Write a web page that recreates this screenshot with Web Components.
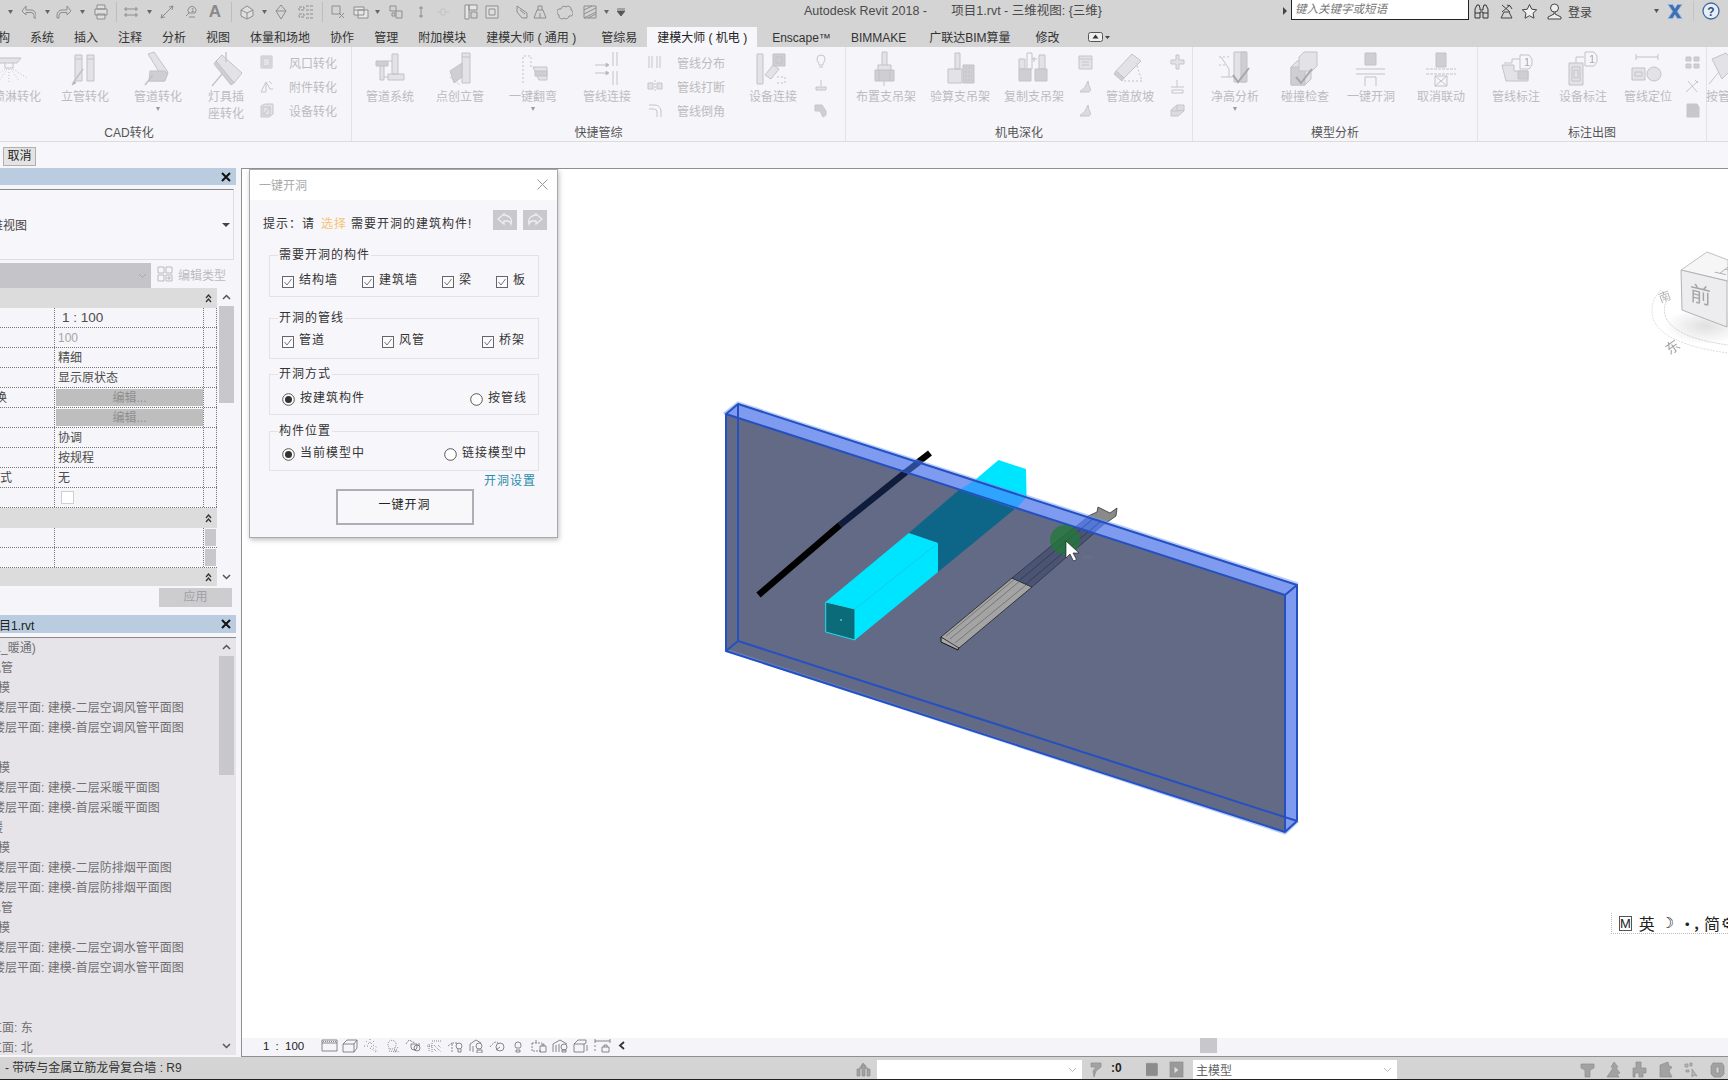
<!DOCTYPE html>
<html lang="zh"><head><meta charset="utf-8"><title>Revit</title>
<style>html,body{margin:0;padding:0;background:#f6f5f9;overflow:hidden}</style>
</head><body>
<rv-app></rv-app>
<script>
const FONT='"Liberation Sans","Noto Sans CJK SC",sans-serif';
const F='fill="#e3e3e6"',D='fill="#cfcfd3"';
const RI={
sprinkler:`<path ${F} d="M-6 7h28l-4 5H-2z"/><path d="M6 12v5h8v-5"/><path stroke-dasharray="1 2" d="M8 18l-8 12M10 18v14M12 18l8 12M14 18l14 9M6 18l-12 9"/>`,
riser:`<path ${F} d="M8 4h7v26H8zM20 4h7v26h-7z"/><path d="M8 8h7M20 8h7"/><path d="M6 32l10-14" stroke-width="1.6"/><path d="M5 34l2-4 2 2z" fill="#aaa"/>`,
pipe:`<path ${F} d="M8 3l6-2 14 20-4 9H9l12-6z"/><path ${D} d="M10 20h14l4 2-3 8H9z"/><path d="M5 34l8-10" stroke-width="1.6"/>`,
lamp:`<path ${F} d="M8 10l6-6 20 18-8 10z"/><path ${D} d="M8 10l18 22-3 2L6 13z"/><path d="M18 1v10M4 35l10-12" stroke-width="1.3"/>`,
system:`<path ${D} d="M4 10h12v5H4z"/><path ${F} d="M8 15h4v14H8zM20 3h6v20h-6zM16 23h16v6H16z"/><path d="M16 10h4M12 26h4"/>`,
dotriser:`<path ${F} d="M20 2h8v30h-8z"/><path d="M20 6h8"/><path ${D} d="M8 20l12-8v14l-8 6z"/><path d="M8 26l10 8" stroke-dasharray="2 1"/>`,
bend:`<path stroke-dasharray="2 2" d="M8 32V5h8v13"/><path ${F} d="M18 16h14v13H24z"/><path ${D} d="M20 20h12v5H20z"/>`,
connect:`<path d="M24 1v14M28 1v14M24 20v14M28 20v14"/><path d="M6 14h14M6 22h14"/><path d="M20 14l-3-2v4zM20 22l-3-2v4z" fill="#aaa"/>`,
device:`<path ${F} d="M2 3h6v30H2z"/><path ${D} d="M18 3h12v12H18z"/><path d="M21 6h6v6h-6z"/><path ${F} d="M10 24l8-10 6 4-8 10z"/><path stroke-dasharray="2 2" d="M22 26h8v6h-8"/>`,
support:`<path ${F} d="M14 1h5v16h-5z"/><path ${D} d="M7 19h19v11H7z"/><path ${F} d="M10 14h13v5H10z"/><path d="M16 30v5M11 19v11M22 19v11"/>`,
check:`<path ${F} d="M13 2h5v16h-5zM6 18h14v14H6z"/><path ${D} d="M21 14h11v18H21z"/><path stroke-dasharray="2 1" d="M23 17h7M23 21h7M23 25h7M23 29h7"/>`,
copy:`<path ${F} d="M3 8h6v10H3zM23 4h6v14h-6z"/><path ${D} d="M3 18h12v12H3zM19 18h12v12H19z"/><path d="M11 2h5v16h-5zM16 8h5M18 6v5" />`,
slope:`<path ${F} d="M4 20L20 3l9 7-17 17z"/><path ${D} d="M4 20l8 7-2 3-8-7z"/><path stroke-dasharray="2 2" d="M12 30h18L24 12"/>`,
clear:`<path d="M4 6l8 12v8M4 26h12"/><path stroke-dasharray="2 2" d="M2 6h10M2 14h8"/><path ${F} d="M17 1h12v30H17z"/><path ${D} d="M24 1h6v30h-6z"/><path d="M16 24l5 7 11-14" stroke="#a8a8ac" stroke-width="2"/>`,
clash:`<path ${F} d="M4 16l6-6h14v18l-6 6H4z"/><path ${D} d="M4 16h14v18H4z"/><path ${F} d="M12 6l5-5h13v14l-5 5H12z"/><path d="M9 26l5 6 11-14" stroke="#a8a8ac" stroke-width="2"/>`,
hole:`<path ${D} d="M12 2h11v12H12z"/><path d="M3 18h29M3 23h29M12 26v9M23 26v9M12 26h11"/>`,
unlink:`<path ${D} d="M13 2h10v14H13z"/><path stroke-dasharray="3 1" d="M3 18h30M3 23h30"/><path d="M12 25h12v10H12zM12 25l12 10M24 25L12 35"/>`,
tag:`<path ${F} d="M4 20h12v6h14v10H8z" transform="translate(0 -6)"/><path d="M22 4h9l3 4v6l-3 4h-9z"/><path ${D} d="M20 20h10v8H20z"/><path d="M6 12h8v-4h8"/><text x="26" y="15" font-size="11" fill="#aaa" stroke="none" font-family="Liberation Sans">1</text>`,
dtag:`<path ${F} d="M4 12h14v22H4z"/><path d="M7 16h8v14H7zM9 19h4v8H9zM11 12V6h8"/><path d="M20 1h9l3 4v6l-3 4h-9z"/><text x="24" y="12" font-size="11" fill="#aaa" stroke="none" font-family="Liberation Sans">1</text>`,
locate:`<path d="M6 6h22M6 3v6M28 3v6"/><path ${F} d="M2 17h13v12H2z"/><path d="M5 21h7v4H5z"/><circle ${F} cx="24" cy="23" r="7"/>`,
generic:`<path ${F} d="M6 8l14-6 10 12-14 14z"/><path d="M3 33l10-12"/>`
};
const SI={
vent:`<path fill="#e3e3e6" d="M2 2h11v12H2z"/><path d="M4 4h7v8H4z"/>`,
fit:`<path d="M2 14l5-10 4 7h3M7 4v10H2M10 3l3 3"/>`,
equip:`<path fill="#e3e3e6" d="M2 4l4-2h8v10l-4 3H2z"/><path d="M4 5h7v8H4zM5 12l5-6"/>`,
dist:`<path d="M2 2v12M5 2v12M10 2v12M13 2v12"/>`,
brk:`<path fill="#e3e3e6" d="M1 5h5v6H1zM10 5h5v6h-5z"/><path d="M8 2v12" stroke-dasharray="2 1"/>`,
fillet:`<path d="M2 3h6a6 6 0 016 6v6M2 7h5a3 3 0 013 3v5"/>`,
bulb:`<path d="M4 5a4 4 0 018 0c0 3-2 3-2 6H6c0-3-2-3-2-6zM6 13h4"/>`,
ins:`<path d="M8 2v6M3 9h10v3H3z" fill="#e3e3e6"/>`,
paint:`<path fill="#cfcfd3" d="M2 3h7l4 6v4l-3 2-3-6H2z"/>`,
cal:`<path fill="#e3e3e6" d="M2 2h13v13H2z"/><path d="M2 5h13M5 8h7M5 11h7"/>`,
mark:`<path d="M3 14c2-4 4-2 5-5l3-6 1 5c2 2 2 5 0 6z" fill="#dcdce0"/>`,
plus:`<path fill="#e3e3e6" d="M7 1h3v5h5v4h-5v5H7v-5H2V6h5z"/>`,
bar:`<path d="M8 2v7M2 9h13M3 12h11v3H3z"/>`,
eraser:`<path fill="#dcdce0" d="M2 8l6-5h7v6l-6 5H2z"/><path d="M8 3v6H2M8 9l7-1"/>`,
dots:`<path fill="#d0d0d4" d="M2 3h5v4H2zM10 3h5v4h-5zM2 10h5v4H2zM10 10h5v4h-5z"/>`,
tools:`<path d="M2 14L14 3M4 3l9 11M11 2l3 3"/>`,
doc:`<path fill="#c8c8cc" d="M3 2h10l2 3v10H3z"/><path d="M5 6h7M5 9h7M5 12h7"/>`
};
const QA={
undo:`<path d="M6 2L2 7l4 4V8.500h5a3 3 0 013 3V14h2v-3a5 5 0 00-5-5H6z"/>`,
redo:`<path d="M10 2l4 5-4 4V8.500H5a3 3 0 00-3 3V14H0v-3a5 5 0 015-5h5z" fill="none"/>`,
print:`<path fill="#dedede" d="M4 1h8v4H4zM2 5h12v6H2zM4 10h8v5H4z"/>`,
align:`<path d="M1 5h14M1 11h14M3 3v4M13 3v4M3 9v4M13 9v4"/>`,
diag:`<path d="M2 14L14 2M2 14l1-4M2 14l4-1M14 2l-4 1M14 2l-1 4"/>`,
tag:`<path d="M2 12l3-3a4 4 0 116 0h-6M5 13h6" /><text x="7" y="8" font-size="6" stroke="none" fill="#777">1</text>`,
house:`<path fill="#e0e0e0" d="M2 6l6-4 6 4v6l-6 3-6-3z"/><path d="M2 6l6 3 6-3M8 9v6"/>`,
gem:`<path d="M8 1l5 6-5 8-5-8zM3 7h10"/>`,
list:`<path d="M1 3h5v3H1zM1 10h5v3H1zM8 2h7M8 6h7M8 10h7M8 14h7" stroke-dasharray="3 1"/>`,
cut:`<path d="M2 2h8v8H2zM9 9l5 5M14 9l-5 5"/>`,
sw:`<path d="M1 3h10v8H1zM5 6h10v8H5z" fill="#e8e8e8"/><path d="M1 6h10"/>`,
tb:`<path d="M2 2h6v5H2zM8 7h6v7H8zM4 9h3v3H4z"/>`,
dim:`<path d="M8 2v12M6 4h4M6 12h4"/>`,
faint:`<path stroke="#c4c4c4" d="M2 8h4M10 8h4M6 5h4v6H6z"/>`,
win:`<path fill="#e6e6e6" d="M2 1h4v14H2zM6 1h8v5H6z"/><path d="M8 8h6v6H8z"/>`,
box:`<path d="M2 2h12v12H2zM5 5h6v6H5z" fill="#dedede"/>`,
wedge:`<path d="M3 2l10 7v5H8L3 8zM6 6l5 4"/>`,
mount:`<path d="M2 14l3-8h6l3 8zM6 6V2h4v4M8 9v5"/>`,
cloud:`<path d="M4 5a3 3 0 015-2 3 3 0 015 3 3 3 0 01-2 6 3 3 0 01-5 2 3 3 0 01-5-3 3 3 0 012-6z"/>`,
hatch:`<path d="M2 2h12v12H2zM2 6l8-4M2 10l12-6M2 14l12-6M6 14l8-4"/>`
};
const VB=['<path d="M1 2h15v11H1zM1 5h15" /><path stroke-dasharray="1 1" d="M2 3.500h13"/>','<path d="M1 6h11v8H1zM1 6l4-4h10v8l-3 4M12 6l3-4"/>','<path stroke-dasharray="1 2" d="M7 1v4M1 8h4M3 3l3 3M11 3l-3 3M8 8l7 6M10 7l5 3M7 10l6 4"/>','<path stroke-dasharray="1 1" d="M5 9a4 4 0 116 0v2H5z"/><path stroke-dasharray="1 1" d="M5 13l8 1M10 12l5 2M14 9l-3 5"/>','<path stroke-dasharray="2 1" d="M1 6l3-4 6 3"/><path d="M6 6h6v3a3 3 0 01-6 0zM14 5v3"/><circle cx="12" cy="10" r="3"/>','<path d="M1 8h5M3 6v7M6 3h10M6 5v9" stroke-dasharray="1 1"/><path stroke-dasharray="1 1" d="M8 7l7 7M12 7l3 3M8 11l3 3"/>','<path stroke-dasharray="2 1" d="M1 8l4-3v9M5 5h5"/><circle cx="12" cy="8" r="3"/><path d="M11 11v3h3v-3"/>','<path d="M2 13V6l6-4 5 3"/><path d="M5 14V8"/><circle cx="11" cy="8" r="3"/><path d="M9 12h5v3H9z"/>','<path stroke-dasharray="2 1" d="M1 9q6-8 9-3"/><circle cx="11" cy="9" r="4"/><path d="M7 12l4-3"/>','<path d="M5 7a3 3 0 016 0q0 2-1 3H6q-1-1-1-3zM6 12h4v2H6z"/>','<path stroke-dasharray="2 1" d="M1 5h10M1 5v8h10"/><path d="M5 2v3M9 8h6v6H9zM11 8V6h2v2"/>','<path d="M1 14V6l7-4 7 4M4 14V7M7 14V6"/><circle cx="12" cy="9" r="3"/><path d="M10 12h4v2h-4z"/>','<path d="M1 6h10v8H1zM1 6l4-4h8v3M11 6l2-1"/><path d="M14 7v6"/>','<path d="M1 3h15M1 1v4M16 1v4M1 7v2M1 11v2"/><path d="M8 9h7v5H8zM10 9V7h3v2"/>'];
function ico(name,size){return `<svg width="${size}" height="${size}" viewBox="0 0 36 36" fill="none" stroke="#c3c3c7" stroke-width="1">${RI[name]||RI.generic}</svg>`}
function sico(name){return `<svg width="17" height="17" viewBox="0 0 17 17" fill="none" stroke="#c6c6ca">${SI[name]||''}</svg>`}
const tpl=(css,html)=>`<style>${css}</style>${html}`;
class Base extends HTMLElement{constructor(){super();this.attachShadow({mode:'open'})}}
const chev=(c='#aaa')=>`<svg width="9" height="6" viewBox="0 0 9 6" fill="none" stroke="${c}"><path d="M1 1l3.500 3.500L8 1"/></svg>`;

class RvTitlebar extends Base{connectedCallback(){
 const items=[['dd',10],['undo',28],['dd',47],['redo',64],['dd',82],['print',101],['sep',116],['align',131],['dd',149],['diag',167],['tag',192],['A',215],['sep',231],['house',247],['dd',264],['gem',281],['list',306],['sep',322],['cut',338],['sw',361],['dd',377],['tb',396],['dim',421],['faint',443],['win',471],['box',492],['wedge',522],['mount',540],['cloud',565],['hatch',590],['dd',606],['qdd',621]];
 let right=0;
 const q=items.map(([n,cx])=>{let c='',w=16;
  if(n=='dd'){c='<svg width="5" height="4" viewBox="0 0 5 4"><path d="M0 0h5L2.500 4z" fill="#666"/></svg>';w=5}
  else if(n=='qdd'){c='<svg width="8" height="8" viewBox="0 0 8 8"><path d="M0 1h8M0 3h8L4 8z" stroke="#555" fill="#555" stroke-width=".8"/></svg>';w=8}
  else if(n=='sep'){c='<i></i>';w=1}
  else if(n=='A'){c='<b>A</b>';w=12}
  else c=`<svg width="16" height="16" viewBox="${n=='redo'?'-1':'0'} 0 16 16" fill="none" stroke="#8d8d8d">${QA[n]}</svg>`;
  const ml=cx-w/2-right;right=cx+w/2;
  return `<span class="q" style="width:${w}px;margin-left:${ml}px">${c}</span>`}).join('');
 this.shadowRoot.innerHTML=tpl(`:host{display:flex;height:27px;background:#d4d4d4;font-size:13px;color:#444;align-items:flex-start;overflow:hidden}
 .qa{display:flex;height:23px;align-items:center;width:804px;flex:none}
 .q{display:flex;align-items:center;justify-content:center;flex:none;height:23px}
 .q i{display:block;width:1px;height:20px;background:#bdbdbd}.q b{font:700 17px ${FONT};color:#8a8a8a}
 .t{line-height:23px;flex:none;width:487px;white-space:pre;color:#4a4a4a;font-size:12.500px}
 .s{width:178px;height:20px;background:#fff;border:1px solid #222;border-top:0;box-sizing:border-box;font:italic 11.500px/19px ${FONT};color:#777;padding-left:3px;flex:none}
 .tri{width:0;height:0;border-left:4px solid #444;border-top:4px solid transparent;border-bottom:4px solid transparent;margin:7px 4px 0 -8px;flex:none}
 .r{display:flex;align-items:center;height:22px}.r span{display:flex;justify-content:center;flex:none}
 .login{font-size:12px;color:#444}`,
 `<div class="qa">${q}</div><div class="t">Autodesk Revit 2018 -       项目1.rvt - 三维视图: {三维}</div><div class="tri"></div><div class="s">键入关键字或短语</div>
 <div class="r">
 <span style="width:24px"><svg width="17" height="17" viewBox="0 0 17 17" fill="none" stroke="#333"><path d="M2 15V6l2-4h2l1 3v2h3V5l1-3h2l2 4v9h-5V9H7v6z"/><path d="M2 10h5M10 10h5"/></svg></span>
 <span style="width:26px"><svg width="17" height="17" viewBox="0 0 17 17" fill="none" stroke="#444"><path d="M4 2l8 7M4 9l8-7M3 15h11l-3-6H6z"/><path d="M9 2q4 0 5 4"/></svg></span>
 <span style="width:21px"><svg width="17" height="17" viewBox="0 0 17 17" fill="#f0f0f0" stroke="#444"><path d="M8.500 1.500l2.200 4.700 5 .6-3.700 3.400 1 5-4.500-2.500L4 15.200l1-5L1.300 6.800l5-.6z"/></svg></span>
 <span style="width:28px"><svg width="17" height="17" viewBox="0 0 17 17" fill="#eee" stroke="#444"><circle cx="8.500" cy="5" r="4"/><path d="M8 9v2l-6 3v2h13v-2l-6-3V9" /></svg></span>
 <span class="login" style="width:78px;justify-content:flex-start">登录</span>
 <span style="width:20px"><svg width="5" height="4" viewBox="0 0 5 4"><path d="M0 0h5L2.500 4z" fill="#555"/></svg></span>
 <span style="width:18px"><svg width="16" height="17" viewBox="0 0 17 17"><path d="M1 1h5l2.500 4L11 1h5l-5 7.500 5 7.500h-5l-2.500-4L6 16H1l5-7.500z" fill="#3f6fb5" stroke="#9db9dc"/></svg></span>
 <span style="width:1px;height:20px;background:#c4c4c4;margin-left:9px"></span>
 <span style="width:34px"><svg width="18" height="18" viewBox="0 0 18 18"><circle cx="9" cy="9" r="8" fill="#e8eef6" stroke="#3f6a9c" stroke-width="1.300"/><text x="9" y="13.500" text-anchor="middle" font-size="12" font-weight="700" fill="#2d4f80" font-family="Liberation Sans">?</text></svg></span>
 </div>`)}}
customElements.define('rv-titlebar',RvTitlebar);

class RvTabs extends Base{connectedCallback(){
 const t=[['结构',{ml:-24}],['系统'],['插入'],['注释'],['分析'],['视图'],['体量和场地'],['协作'],['管理'],['附加模块'],['建模大师 ( 通用 )'],['管综易',{ml:5}],['建模大师 ( 机电 )',{a:1}],['Enscape™',{ml:5}],['BIMMAKE',{ml:0}],['广联达BIM算量',{ml:3}],['修改',{ml:5}]];
 this.shadowRoot.innerHTML=tpl(`:host{display:flex;height:20px;background:#d4d4d4;font-size:12px;color:#333;overflow:hidden;align-items:stretch}
 span{padding:2px 10px 0;line-height:18px;white-space:nowrap;flex:none}
 .a{background:#f7f6fa;box-shadow:0 -1px 0 #eee;color:#222}
 svg{margin:4px 0 0 18px;flex:none}`,
 t.map(([x,o={}])=>`<span class="${o.a?'a':''}" style="margin-left:${o.ml||0}px">${x}</span>`).join('')+
 `<svg width="22" height="13" viewBox="0 0 22 13" fill="none"><rect x=".5" y="1.500" width="14" height="9" rx="2" stroke="#555" fill="#eee"/><path d="M7.500 3.500l3 4h-6z" fill="#333"/><path d="M17 5h5l-2.500 3z" fill="#444"/></svg>`)}}
customElements.define('rv-tabs',RvTabs);

class RvTool extends Base{connectedCallback(){
 const lines=(this.getAttribute('label')||'').split('|');
 this.shadowRoot.innerHTML=tpl(`:host{display:flex;flex-direction:column;align-items:center;flex:none;padding-top:4px;font-size:12px;line-height:17px;color:#bcbcc0;width:${this.getAttribute('w')}px}
 .i{height:38px;filter:blur(.3px)}.l{white-space:nowrap;text-align:center}.d{font-size:0;line-height:0;margin-top:1px;width:0;height:0;border-left:2.500px solid transparent;border-right:2.500px solid transparent;border-top:4px solid #999}`,
 `<div class="i">${ico(this.getAttribute('icon'),36)}</div>${lines.map(l=>`<div class="l">${l}</div>`).join('')}${this.hasAttribute('drop')?'<div class="d"></div>':''}`)}}
customElements.define('rv-tool',RvTool);

class RvSmall extends Base{connectedCallback(){
 const it=this.getAttribute('items').split(';').map(s=>s.split(':'));
 const pad=this.getAttribute('pad')||0, gap=this.getAttribute('gap')||0;
 this.shadowRoot.innerHTML=tpl(`:host{display:flex;flex-direction:column;flex:none;padding-top:3px;box-sizing:border-box;padding-left:${pad}px;width:${this.getAttribute('w')}px;font-size:12px;color:#bcbcc0}
 div{height:24px;display:flex;align-items:center;white-space:nowrap}span{margin-left:${gap}px}svg{flex:none;filter:blur(.25px)}`,
 it.map(([i,l])=>`<div>${sico(i)}${l?`<span>${l}</span>`:''}</div>`).join(''))}}
customElements.define('rv-small',RvSmall);

class RvPanel extends Base{connectedCallback(){
 const ml=this.getAttribute('ml')||0,pl=this.getAttribute('pl')||0;
 this.shadowRoot.innerHTML=tpl(`:host{display:flex;flex-direction:column;flex:none;box-sizing:border-box;height:94px;width:${this.getAttribute('w')}px;margin-left:${ml}px;border-right:1px solid #e3e3e7}
 .tools{display:flex;height:76px;padding-left:${pl}px;flex:none}
 .t{height:18px;text-align:center;font-size:12px;line-height:18px;color:#555;margin-top:1px}`,
 `<div class="tools"><slot></slot></div><div class="t">${this.getAttribute('title')}</div>`)}}
customElements.define('rv-panel',RvPanel);

class RvRibbon extends Base{connectedCallback(){
 this.shadowRoot.innerHTML=tpl(`:host{display:flex;height:95px;background:#f6f5f9;border-bottom:1px solid #dcdcdf;box-sizing:border-box;overflow:hidden}`,`<slot></slot>`)}}
customElements.define('rv-ribbon',RvRibbon);

class RvOptions extends Base{connectedCallback(){
 this.shadowRoot.innerHTML=tpl(`:host{display:flex;height:25px;background:#f7f6fa;align-items:flex-start;box-sizing:border-box;padding:5px 0 0 3px}
 button{all:unset;box-sizing:border-box;width:33px;height:19px;background:#e4e4e4;border:1px solid #b0b0b0;font-size:12px;line-height:17px;text-align:center;color:#222}`,`<button>取消</button>`)}}
customElements.define('rv-options',RvOptions);

class RvScroll extends Base{connectedCallback(){
 const tb=`<svg width="9" height="6" viewBox="0 0 9 6" fill="none" stroke="#555" stroke-width="1.500"><path d="M1 5l3.500-3.500L8 5"/></svg>`;
 const bb=`<svg width="9" height="6" viewBox="0 0 9 6" fill="none" stroke="#555" stroke-width="1.500"><path d="M1 1l3.500 3.500L8 1"/></svg>`;
 this.shadowRoot.innerHTML=tpl(`:host{display:flex;flex-direction:column;width:15px;flex:none;align-items:center}
 .a{height:18px;display:flex;align-items:center;justify-content:center;flex:none}.th{width:15px;background:#c8c8cc;flex:none;height:${this.getAttribute('thumb')}px}.f{flex:1}`,
 `<div class="a">${tb}</div><div class="th"></div><div class="f"></div><div class="a">${bb}</div>`)}}
customElements.define('rv-scroll',RvScroll);

class RvPaneTitle extends Base{connectedCallback(){
 this.shadowRoot.innerHTML=tpl(`:host{display:flex;align-items:center;height:${this.getAttribute('h')||18}px;width:236px;background:#bacde0;font-size:12px;color:#222;box-sizing:border-box;padding-right:5px;flex:none}
 span{flex:1;white-space:nowrap}svg{flex:none}`,
 `<span><slot></slot></span><svg width="10" height="10" viewBox="0 0 10 10" stroke="#111" stroke-width="2"><path d="M1 1l8 8M9 1l-8 8"/></svg>`)}}
customElements.define('rv-pane-title',RvPaneTitle);

class RvProps extends Base{connectedCallback(){
 const dbl=`<svg width="7" height="9" viewBox="0 0 7 9" fill="none" stroke="#333" stroke-width="1.300"><path d="M1 4l2.500-3L6 4M1 8l2.500-3L6 8"/></svg>`;
 const hdr=(h)=>`<div class="hd" style="height:${h}px">${dbl}</div>`;
 const row=(l,v,c='')=>`<div class="r"><div class="c1">${l}</div><div class="c2 ${c}">${v}</div><div class="c3"></div></div>`;
 const rows=row('','1 : 100','sc')+row('','100','gr')+row('','精细')+row('','显示原状态')+row('<span style="margin-left:-5px">换</span>','<b>编辑...</b>','ed')+row('','<b>编辑...</b>','ed')+row('','协调')+row('','按规程')+row('式','无')+row('','<u></u>');
 this.shadowRoot.innerHTML=tpl(`:host{display:flex;flex-direction:column;height:443px;width:241px;box-sizing:border-box;padding-top:1px;font-size:12px;color:#555;flex:none}
 .type{height:71px;width:234px;margin-top:4px;box-sizing:border-box;background:#f7f6fa;border:1px solid #dedde2;border-left:0;border-top:1px solid #888;display:flex;align-items:center;justify-content:space-between;padding-right:3px;flex:none}
 .type span{margin-left:-21px;color:#444}.type i{width:0;height:0;border-left:4px solid transparent;border-right:4px solid transparent;border-top:4px solid #444}
 .sel{display:flex;height:25px;margin-top:3px;flex:none}.dd{width:151px;background:#c5c5c9;display:flex;align-items:center;justify-content:flex-end;padding-right:4px;box-sizing:border-box}
 .et{display:flex;align-items:center;padding:0 0 3px 6px;color:#bcbcc0;gap:5px}
 .body{display:flex;height:298px;flex:none}.grid{width:217px;flex:none;display:flex;flex-direction:column}
 .hd{background:#dcdcdc;display:flex;align-items:center;justify-content:flex-end;padding-right:5px;box-sizing:border-box;flex:none}
 .r{display:flex;height:20px;box-sizing:border-box;border-bottom:1px dotted #777;flex:none}
 .c1{width:55px;box-sizing:border-box;border-right:1px dotted #777;line-height:20px;flex:none;color:#444;overflow:hidden}.c2{width:149px;box-sizing:border-box;padding-left:3px;line-height:20px;border-right:1px dotted #777;color:#4c4c4c;flex:none}.c3{flex:1;border-right:1px dotted #777}
 .sc{padding-left:7px;font-size:13.500px;line-height:19px}.gr{color:#a5a5a5}
 .ed{padding:1px 0 1px 1px}.ed b{display:block;height:17px;background:#bebebe;color:#8f8f8f;font-weight:400;text-align:center;line-height:18px}
 u{display:block;width:11px;height:11px;border:1px solid #cfcfd3;background:#fff;margin:3px 0 0 3px}
 .t{width:11px;background:#c8c8cc;margin:1px 0 1px 1px}
 .apply{display:flex;justify-content:flex-end;padding:2px 9px 0 0}
 .apply span{display:block;width:73px;height:19px;background:#cdcdd0;color:#a0a0a4;text-align:center;line-height:19px}
 .sb{margin-left:2px}`,
 `<rv-pane-title h="17"></rv-pane-title>
 <div class="type"><span>三维视图</span><i></i></div>
 <div class="sel"><div class="dd">${chev('#aaa')}</div><div class="et"><svg width="16" height="16" viewBox="0 0 16 16" fill="none" stroke="#bbb"><path d="M1 1h6v6H1zM9 1h6v6H9zM1 9h6v6H1zM9 9h6v6H9z"/><path d="M11 11h2v2h-2z"/></svg><span>编辑类型</span></div></div>
 <div class="body"><div class="grid">${hdr(20)}${rows}${hdr(20)}
 <div class="r"><div class="c1"></div><div class="c2"></div><div class="t"></div></div>
 <div class="r"><div class="c1"></div><div class="c2"></div><div class="t"></div></div>
 ${hdr(18)}</div><rv-scroll class="sb" thumb="97"></rv-scroll></div>
 <div class="apply"><span>应用</span></div>`)}}
customElements.define('rv-props',RvProps);

class RvBrowser extends Base{connectedCallback(){
 const p='楼层平面: 建模-';
 const R=[['(立_暖通)',-15],['风管',-11],['建模',-14],[p+'二层空调风管平面图',-7],[p+'首层空调风管平面图',-7],['',0],['建模',-14],[p+'二层采暖平面图',-7],[p+'首层采暖平面图',-7],['暖',-9],['建模',-14],[p+'二层防排烟平面图',-7],[p+'首层防排烟平面图',-7],['水管',-11],['建模',-14],[p+'二层空调水管平面图',-7],[p+'首层空调水管平面图',-7],['',0],['',0],['立面: 东',-10],['立面: 北',-10]];
 this.shadowRoot.innerHTML=tpl(`:host{display:flex;flex-direction:column;height:447px;width:241px;font-size:12px;flex:none;overflow:hidden;padding-top:5px;box-sizing:border-box}
 .list{display:flex;height:418px;width:236px;margin-top:4px;background:#e6e4e9;border-top:1px solid #888;box-sizing:border-box;flex:none;overflow:hidden}
 .rows{flex:1;overflow:hidden}.rows div{height:20px;line-height:20px;color:#707072;white-space:nowrap}
 .nm{color:#222}`,
 `<rv-pane-title h="18"><span class="nm" style="margin-left:-13px;display:block">项目1.rvt</span></rv-pane-title>
 <div class="list"><div class="rows">${R.map(([t,m])=>`<div style="margin-left:${m}px">${t||'&nbsp;'}</div>`).join('')}</div><rv-scroll thumb="119"></rv-scroll><div style="width:2px"></div></div>`)}}
customElements.define('rv-browser',RvBrowser);

class RvCheck extends Base{connectedCallback(){
 const radio=this.getAttribute('type')=='radio',on=this.hasAttribute('on'),w=this.getAttribute('w');
 const mark=radio?`<svg width="13" height="13" viewBox="0 0 13 13"><circle cx="6.500" cy="6.500" r="5.800" fill="#fff" stroke="#555"/>${on?'<circle cx="6.500" cy="6.500" r="3.500" fill="#333"/>':''}</svg>`
 :`<svg width="12" height="12" viewBox="0 0 12 12"><rect x=".5" y=".5" width="11" height="11" fill="#fbfbfd" stroke="#666"/><path d="M2.500 6l2.500 3 4.500-6" fill="none" stroke="#777"/></svg>`;
 this.shadowRoot.innerHTML=tpl(`:host{display:flex;align-items:center;height:18px;flex:none;font-size:12px;letter-spacing:1px;color:#333;${w?`width:${w}px`:''}}
 svg{margin:${radio?4:5}px 5px 0 0;flex:none}span{margin-bottom:2px}`,`${mark}<span><slot></slot></span>`)}}
customElements.define('rv-check',RvCheck);

class RvGroup extends Base{connectedCallback(){
 this.shadowRoot.innerHTML=tpl(`:host{display:flex;box-sizing:border-box;position:relative;margin:${this.getAttribute('mt')}px 8px 0 6px;height:${this.getAttribute('h')}px;border:1px solid #e4e2e8;padding:${this.getAttribute('pt')}px 0 0 12px;flex:none}
 .lg{position:absolute;left:8px;top:-9px;height:16px;line-height:16px;padding:0 1px;background:#f7f6fa;font-size:12px;letter-spacing:1px;color:#333}`,
 `<div class="lg">${this.getAttribute('title')}</div><slot></slot>`)}}
customElements.define('rv-group',RvGroup);

class RvDialog extends Base{connectedCallback(){
 const arrow=(flip)=>`<svg width="24" height="20" viewBox="0 0 24 20"><rect width="24" height="20" fill="#c9c9cd"/><g fill="none" stroke="#eee" stroke-width="1.300" ${flip?'transform="matrix(-1 0 0 1 24 0)"':''}><path d="M11 4l-6 5 6 5v-3h3a4 4 0 014 3q2-7-6-9h-1z"/></g></svg>`;
 this.shadowRoot.innerHTML=tpl(`:host{display:flex;flex-direction:column;position:absolute;left:7px;top:0;width:309px;height:369px;box-sizing:border-box;background:#f7f6fa;border:1px solid #a9a9ad;box-shadow:1px 2px 5px rgba(0,0,0,.25);font-size:12px;color:#333;z-index:2}
 .ti{height:30px;background:#fff;display:flex;align-items:center;justify-content:space-between;padding:0 9px 2px;box-sizing:border-box;color:#aaa;flex:none}
 .b{flex:1;display:flex;flex-direction:column;padding:0 10px 0 13px}
 .h{display:flex;align-items:center;height:20px;margin-top:10px;flex:none;letter-spacing:1px}.h em{font-style:normal;color:#f6c474;margin:0 4px 0 6px}.h .tx{flex:1;white-space:nowrap;padding-top:4px}.h svg{margin-left:6px}
 .link{align-self:flex-end;margin:2px 11px 0 0;color:#2a8dab;line-height:16px;letter-spacing:1px;flex:none}
 .btn{align-self:center;width:138px;height:36px;box-sizing:border-box;border:2px solid #b0aeb4;background:#f8f7fa;text-align:center;line-height:29px;letter-spacing:1px;flex:none;color:#222;margin-left:-1px}`,
 `<div class="ti"><span>一键开洞</span><svg width="11" height="11" viewBox="0 0 11 11" stroke="#999"><path d="M.5.5l10 10M10.500.5l-10 10"/></svg></div>
 <div class="b">
 <div class="h"><span class="tx">提示：请<em>选择</em>需要开洞的建筑构件!</span>${arrow(0)}${arrow(1)}</div>
 <rv-group title="需要开洞的构件" mt="25" h="42" pt="14"><rv-check w="80" on>结构墙</rv-check><rv-check w="80" on>建筑墙</rv-check><rv-check w="54" on>梁</rv-check><rv-check on>板</rv-check></rv-group>
 <rv-group title="开洞的管线" mt="21" h="41" pt="11"><rv-check w="100" on>管道</rv-check><rv-check w="100" on>风管</rv-check><rv-check on>桥架</rv-check></rv-group>
 <rv-group title="开洞方式" mt="15" h="41" pt="13"><rv-check type="radio" w="188" on>按建筑构件</rv-check><rv-check type="radio">按管线</rv-check></rv-group>
 <rv-group title="构件位置" mt="16" h="40" pt="11"><rv-check type="radio" w="162" on>当前模型中</rv-check><rv-check type="radio">链接模型中</rv-check></rv-group>
 <div class="link">开洞设置</div><div class="btn">一键开洞</div>
 </div>`)}}
customElements.define('rv-dialog',RvDialog);

class RvViewport extends Base{connectedCallback(){
 const E='#2450c2';
 this.shadowRoot.innerHTML=tpl(`:host{display:block;position:relative;height:869px;background:#fff;overflow:hidden;flex:none}
 svg.m{position:absolute;left:0;top:0}
 .ime{position:absolute;left:1369px;top:744px;height:20px;width:120px;display:flex;align-items:center;border-left:1px dotted #bbb;border-bottom:1px dotted #bbb;font-size:16px;color:#222;white-space:nowrap;font-family:"Noto Sans CJK SC",sans-serif}
 .ime b{display:block;box-sizing:border-box;width:15px;height:15px;border:1px solid #555;font:400 13px/13px "Liberation Sans",sans-serif;text-align:center;margin:0 7px 0 7px}
 .ime span{flex:none}`,
 `<svg class="m" width="1486" height="869" viewBox="242 169 1486 869" font-family='"Noto Sans CJK SC",sans-serif'>
 <polygon points="975,480 998.500,460 1026,469 1026.600,497" fill="#00e5ff"/>
 <line x1="917" y1="463" x2="930" y2="453" stroke="#000" stroke-width="6.500"/>
 <polygon points="1086,517 1106,523 1116,516 1117,508 1110,513 1104,510 1098,507 1097,512" fill="#8a8a8a" stroke="#222" stroke-width=".7"/>
 <polygon points="726,414 738,404 738,641 726,651" fill="#5c6690"/>
 <polygon points="726,651 738,641 1297,821 1285,832" fill="#5e6788"/>
 <polygon points="726,414 1285,595 1285,832 726,651" fill="#636a85"/>
 <polygon points="726,414 738,404 1297,585 1285,595" fill="#7f9bf0"/>
 <polygon points="1285,595 1297,585 1297,821 1285,832" fill="#7f9bf0"/>
 <polygon points="908.800,533 959,490 1016,508 938,572 938,543" fill="#0d6687"/>
 <polygon points="959,490 975,480 1026.600,497 1016,509" fill="#2fa4ff"/>
 <polygon points="825.700,602 855,609 938,543 908.800,533" fill="#00e5ff"/>
 <polygon points="855,609 855,640 938,572 938,543" fill="#00e5ff"/>
 <polygon points="825.700,602 855,609 855,640 825.700,632" fill="#0b6b78" stroke="#18e2f2" stroke-width="1"/>
 <circle cx="841" cy="620" r=".8" fill="#9ff"/>
 <line x1="758.500" y1="595" x2="840" y2="525" stroke="#000" stroke-width="6.500"/>
 <line x1="840" y1="525" x2="906" y2="472" stroke="#101c3c" stroke-width="6.500"/>
 <line x1="906" y1="472" x2="919" y2="462" stroke="#2c4a94" stroke-width="6.500"/>
 <polygon points="941,637 959,646 958,650 941,642" fill="#aaa" stroke="#111"/>
 <polygon points="941,637 1012,578 1032,587 959,648" fill="#a4a4a4" stroke="#222" stroke-width=".8"/>
 <path d="M950 639l70-58M955 643l71-58M946 636l70-58" stroke="#666" stroke-width=".7" fill="none"/>
 <polygon points="1012,578 1074.600,527 1094.400,533 1032,587" fill="#4b5573" stroke="#252c3c" stroke-width=".7"/>
 <path d="M1020 580l61-51M1026 584l62-52" stroke="#2b3348" stroke-width=".7" fill="none"/>
 <polygon points="1074.600,527 1086.400,517 1106.400,523 1094.400,533" fill="#5578d6"/>
 <path d="M1081 529l12-10M1088 532l12-10" stroke="#2c49a0" stroke-width=".7" fill="none"/>
 <g fill="none" stroke="#6d9cf5" stroke-width="3" opacity=".5"><path d="M725 650l560 183 13-12M724 414l14-11 560 181"/></g>
 <g fill="none" stroke="${E}" stroke-width="2" stroke-linejoin="round">
 <polygon points="726,414 738,404 1297,585 1285,595"/>
 <path d="M726 414v237l559 181V595M1297 585v236l-12 11M738 404v237l559 180M726 651l12-10"/>
 </g>
 <circle cx="1065" cy="540" r="15" fill="#1f7a33" fill-opacity=".72"/>
 <path d="M1066 541v17l4-4 3.500 7 3-1.500-3.500-6.500h6z" fill="#fff" stroke="#111" stroke-width=".6"/>
 <path d="M1083 556h9M1083 558h9" stroke="#6d7082" stroke-width="1"/>
 <g opacity=".9">
 <defs><radialGradient id="sh"><stop offset="0" stop-color="#ddd"/><stop offset="1" stop-color="#fff"/></radialGradient></defs>
 <ellipse cx="1705" cy="326" rx="40" ry="18" fill="url(#sh)"/>
 <path d="M1661 290q-12 12-8 28 8 26 75 35" fill="none" stroke="#d8d8d8" stroke-width="1" stroke-dasharray="2 1"/>
 <path d="M1668 298q-6 10-2 20 10 20 62 27" fill="none" stroke="#ccc" stroke-width="1" stroke-dasharray="2 1"/>
 <polygon points="1681,270 1707,252 1728,260 1728,281" fill="#f6f6f6" stroke="#bbb"/>
 <polygon points="1681,270 1727,281 1727,327 1682,310" fill="#ececee" stroke="#aaa"/>
 <text transform="matrix(1 .24 0 1 1690 300)" font-size="21" fill="#9c9c9c">前</text>
 <text transform="matrix(.9 .2 -.8 .6 1714 272)" font-size="14" fill="#aaa">上</text>
 <text transform="rotate(-20 1668 300)" x="1660" y="300" font-size="12" fill="#aaa">南</text>
 <text transform="rotate(-35 1677 350)" x="1668" y="350" font-size="14" fill="#999">东</text>
 </g>
 </svg>
 <slot></slot>
 <div class="ime"><b>M</b><span style="margin-right:6px">英</span><span style="margin-right:6px;font:700 15px 'DejaVu Sans',sans-serif">☽</span><span style="margin-right:5px;font-size:14px;font-weight:700">•,</span><span style="margin-right:1px">简</span><span style="font:14px 'DejaVu Sans',sans-serif">⚙</span></div>`)}}
customElements.define('rv-viewport',RvViewport);

class RvViewbar extends Base{connectedCallback(){
 this.shadowRoot.innerHTML=tpl(`:host{display:flex;height:19px;box-sizing:border-box;background:#f5f4f8;border-bottom:1px solid #8f8f8f;align-items:center;flex:none;padding:0 0 3px 21px;overflow:hidden}
 .s{width:41px;margin-right:15px;font-size:11.500px;white-space:pre;color:#222;flex:none;word-spacing:3px}
 .i{width:21px;display:flex;justify-content:center;flex:none}.lt{width:16px;font-size:0;display:flex;justify-content:center;flex:none}
 .th{margin-left:571px;width:17px;height:15px;background:#c8c8cc;flex:none;align-self:flex-start}`,
 `<span class="s">1 : 100</span>${VB.map(p=>`<span class="i"><svg width="17" height="15" viewBox="0 0 17 15" fill="none" stroke="#6c6c6c" stroke-width=".8">${p}</svg></span>`).join('')}<span class="lt"><svg width="7" height="9" viewBox="0 0 7 9" fill="none" stroke="#333" stroke-width="1.800"><path d="M6 1L2 4.500 6 8"/></svg></span><span class="th"></span>`)}}
customElements.define('rv-viewbar',RvViewbar);

class RvStatus extends Base{connectedCallback(){
 const sel=(w,t='')=>`<span class="sel" style="width:${w}px"><span>${t}</span>${chev('#bbb')}</span>`;
 const g=(d,w=17)=>`<svg width="${w}" height="17" viewBox="0 0 17 17" fill="#a2a2a2" stroke="#8e8e8e" stroke-width=".7">${d}</svg>`;
 this.shadowRoot.innerHTML=tpl(`:host{display:flex;height:23px;background:#d4d4d4;font-size:12px;color:#333;align-items:flex-start;border-bottom:1px solid #222;box-sizing:border-box;flex:none;overflow:hidden}
 .t{width:850px;padding-left:5px;box-sizing:border-box;line-height:23px;flex:none;white-space:nowrap}
 .sel{display:flex;align-items:center;justify-content:space-between;height:19px;margin-top:3px;background:#fff;box-sizing:border-box;padding:0 5px 0 3px;color:#666;flex:none}
 .i{display:flex;justify-content:center;padding-top:4px;flex:none}`,
 `<span class="t">- 带砖与金属立筋龙骨复合墙 : R9</span>
 <span class="i" style="width:27px">${g('<path d="M2 15V8h3v7zM7 15V4h3v11zM12 15V8h3v7zM4 8l4-6 5 6"/>')}</span>
 ${sel(205)}
 <span class="i" style="width:26px">${g('<path d="M4 2h10v4l-5 4-2 6-1-6 3-4H4z"/>')}</span>
 <span style="width:38px;padding-left:3px;box-sizing:border-box;line-height:22px;flex:none;color:#222;font-weight:700;font-size:12px">:0</span>
 <span class="i" style="width:14px">${g('<rect x="0" y="1" width="14" height="15" rx="1" fill="#8c8c8c"/>',14)}</span>
 <span class="i" style="width:33px">${g('<rect x="2" y="1" width="13" height="15" fill="#9a9a9a"/><path d="M6 5l5 4-5 4z" fill="#ddd"/>')}</span>
 ${sel(204,'主模型')}
 <span style="width:177px;flex:none"></span>
 <span class="i" style="width:26px">${g('<path d="M2 3h13v4l-4 2v7H6V9L2 7z"/>')}</span>
 <span class="i" style="width:26px">${g('<path d="M9 1l4 5-2 1 4 5-3 1 2 3H2l6-9-2-1z"/>')}</span>
 <span class="i" style="width:26px">${g('<path d="M5 1h5v6h5v5h-3v4H8v-4H4v4H2V7h3z"/>')}</span>
 <span class="i" style="width:26px">${g('<path d="M3 4l8-3 1 4 3 1-3 4 3 6H3z"/>')}</span>
 <span class="i" style="width:26px">${g('<path d="M2 3h3v3H2zM7 2h2v3H7zM3 9h3v2H3zM9 8l5 7-4-1-1 2z" fill="#bbb"/>')}</span>
 <span class="i" style="width:26px">${g('<path d="M4 2h9l2 3v8l-3 3H5l-3-3V5zM7 6v6h3V6z" fill-rule="evenodd"/>')}</span>`)}}
customElements.define('rv-status',RvStatus);

class RvApp extends Base{connectedCallback(){
 this.shadowRoot.innerHTML=tpl(`:host{display:flex;flex-direction:column;width:1728px;height:1080px;overflow:hidden;font-family:${FONT};background:#f6f5f9}
 .main{display:flex;height:890px;flex:none}.left{display:flex;flex-direction:column;width:241px;flex:none}
 .right{display:flex;flex-direction:column;flex:1;margin-top:1px;border-top:1px solid #8f8f8f;border-left:1px solid #8f8f8f;min-width:0}`,
 `<rv-titlebar></rv-titlebar><rv-tabs></rv-tabs>
 <rv-ribbon>
 <rv-panel title="CAD转化" w="445" ml="-93" pl="77">
  <rv-tool w="66" icon="sprinkler" label="喷淋转化"></rv-tool><rv-tool w="70" icon="riser" label="立管转化"></rv-tool><rv-tool w="76" icon="pipe" label="管道转化" drop></rv-tool><rv-tool w="60" icon="lamp" label="灯具插|座转化"></rv-tool>
  <rv-small w="96" pad="3" gap="13" items="vent:风口转化;fit:附件转化;equip:设备转化"></rv-small>
 </rv-panel>
 <rv-panel title="快捷管综" w="494">
  <rv-tool w="76" icon="system" label="管道系统"></rv-tool><rv-tool w="64" icon="dotriser" label="点创立管"></rv-tool><rv-tool w="82" icon="bend" label="一键翻弯" drop></rv-tool><rv-tool w="66" icon="connect" label="管线连接"></rv-tool>
  <rv-small w="106" pad="7" gap="13" items="dist:管线分布;brk:管线打断;fillet:管线倒角"></rv-small>
  <rv-tool w="54" icon="device" label="设备连接"></rv-tool><rv-small w="46" pad="13" items="bulb;ins;paint"></rv-small>
 </rv-panel>
 <rv-panel title="机电深化" w="347">
  <rv-tool w="80" icon="support" label="布置支吊架"></rv-tool><rv-tool w="68" icon="check" label="验算支吊架"></rv-tool><rv-tool w="80" icon="copy" label="复制支吊架"></rv-tool>
  <rv-small w="22" pad="3" items="cal;mark;mark"></rv-small><rv-tool w="68" icon="slope" label="管道放坡"></rv-tool><rv-small w="28" pad="5" items="plus;bar;eraser"></rv-small>
 </rv-panel>
 <rv-panel title="模型分析" w="285">
  <rv-tool w="84" icon="clear" label="净高分析" drop></rv-tool><rv-tool w="56" icon="clash" label="碰撞检查"></rv-tool><rv-tool w="76" icon="hole" label="一键开洞"></rv-tool><rv-tool w="64" icon="unlink" label="取消联动"></rv-tool>
 </rv-panel>
 <rv-panel title="标注出图" w="229">
  <rv-tool w="76" icon="tag" label="管线标注"></rv-tool><rv-tool w="58" icon="dtag" label="设备标注"></rv-tool><rv-tool w="72" icon="locate" label="管线定位"></rv-tool><rv-small w="17" items="dots;tools;doc"></rv-small>
 </rv-panel>
 <rv-panel title="" w="60"><rv-tool w="34" icon="generic" label="按管线"></rv-tool></rv-panel>
 </rv-ribbon>
 <rv-options></rv-options>
 <div class="main"><div class="left"><rv-props></rv-props><rv-browser></rv-browser></div>
 <div class="right"><rv-viewport><rv-dialog></rv-dialog></rv-viewport><rv-viewbar></rv-viewbar></div></div>
 <rv-status></rv-status>`)}}
customElements.define('rv-app',RvApp);
</script>
</body></html>
